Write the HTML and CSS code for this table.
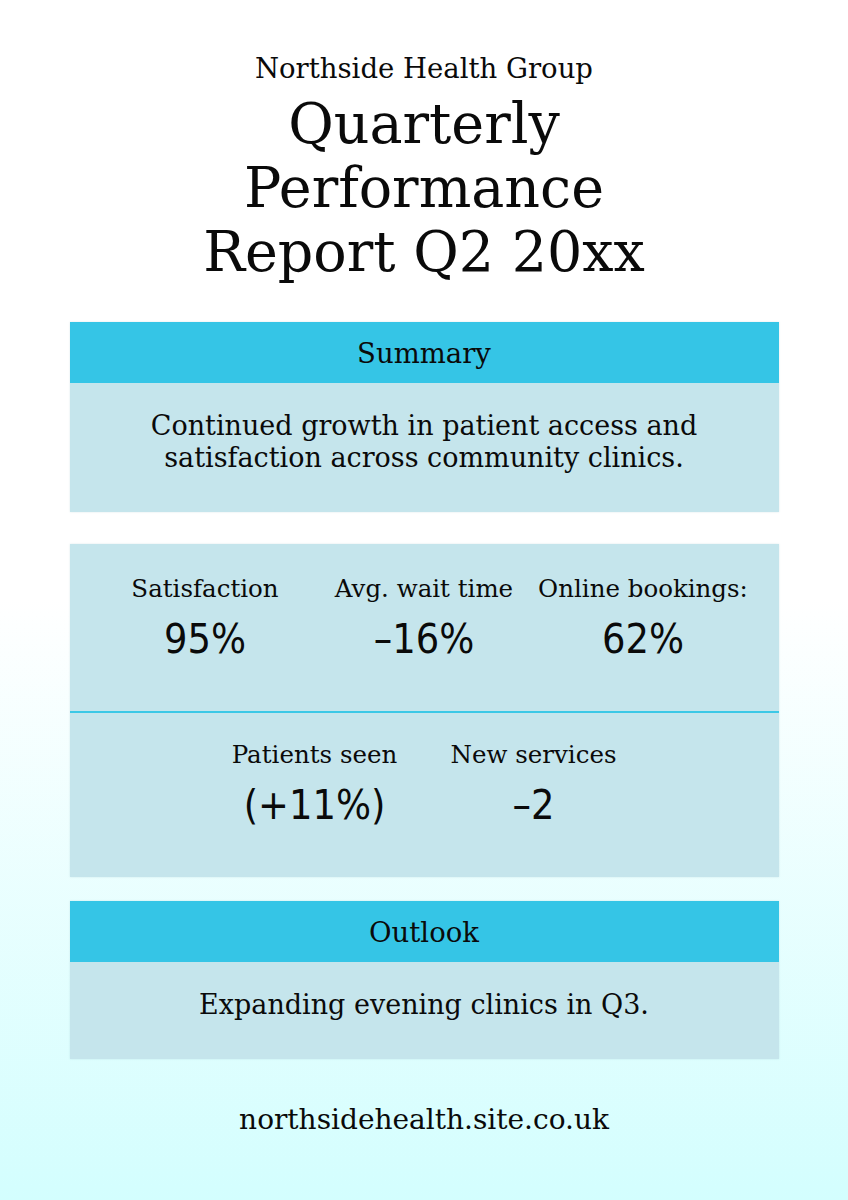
FILE: index.html
```html
<!DOCTYPE html>
<html lang="en">
<head>
<meta charset="utf-8">
<title>Quarterly Performance Report</title>
<link rel="stylesheet" href="styles.css">
</head>
<body>
<main class="page">
  <header class="masthead">
    <p class="org">Northside Health Group</p>
    <h1 class="title">Quarterly<br>Performance<br>Report Q2 20xx</h1>
  </header>

  <section class="panel">
    <h2 class="panel-head">Summary</h2>
    <div class="panel-body">
      <p>Continued growth in patient access and<br>satisfaction across community clinics.</p>
    </div>
  </section>

  <section class="stats">
    <div class="stat-row">
      <div class="stat"><span class="label">Satisfaction</span><span class="value">95%</span></div>
      <div class="stat"><span class="label">Avg. wait time</span><span class="value">–16%</span></div>
      <div class="stat"><span class="label">Online bookings:</span><span class="value">62%</span></div>
    </div>
    <div class="stat-row divided">
      <div class="stat"><span class="label">Patients seen</span><span class="value">(+11%)</span></div>
      <div class="stat"><span class="label">New services</span><span class="value">–2</span></div>
    </div>
  </section>

  <section class="panel outlook">
    <h2 class="panel-head">Outlook</h2>
    <div class="panel-body">
      <p>Expanding evening clinics in Q3.</p>
    </div>
  </section>

  <footer class="site">northsidehealth.site.co.uk</footer>
</main>
</body>
</html>
```

FILE: styles.css
```css
* { box-sizing: border-box; }

html, body {
  margin: 0;
  padding: 0;
}

body {
  width: 848px;
  height: 1200px;
  background: linear-gradient(to bottom, #ffffff 0%, #ffffff 50%, #d3fefe 100%);
  font-family: "DejaVu Serif", "Liberation Serif", serif;
  color: #0a0a0a;
}

.page {
  display: flex;
  flex-direction: column;
  align-items: center;
  padding-top: 51px;
}

.masthead {
  text-align: center;
}

.org {
  margin: 0;
  font-size: 27.5px;
  line-height: 34px;
}

.title {
  margin: 7px 0 0;
  font-weight: normal;
  font-size: 55.5px;
  line-height: 64px;
}

.panel {
  width: 709px;
  margin-top: 38px;
  box-shadow: 0 0 2px rgba(120, 170, 180, 0.25);
}

.panel-head {
  margin: 0;
  height: 61px;
  display: flex;
  align-items: center;
  justify-content: center;
  background: #35c5e6;
  font-weight: normal;
  font-size: 27.5px;
}

.panel-body {
  background: #c5e5ec;
  padding: 27px 30px 38px;
  text-align: center;
}

.panel-body p {
  margin: 0;
  font-size: 27px;
  line-height: 32px;
}

.stats {
  width: 709px;
  margin-top: 32px;
  background: #c5e5ec;
  box-shadow: 0 0 2px rgba(120, 170, 180, 0.25);
}

.stat-row {
  height: 167px;
  display: flex;
  justify-content: center;
  padding-top: 28px;
}

.stat-row.divided {
  height: 166px;
  border-top: 2px solid #3cc8e6;
  padding-top: 25px;
}

.stat {
  width: 219px;
  display: flex;
  flex-direction: column;
  align-items: center;
  white-space: nowrap;
}

.label {
  font-size: 24.5px;
  line-height: 34px;
}

.value {
  margin-top: 8px;
  font-family: "DejaVu Sans", "Liberation Sans", sans-serif;
  font-stretch: condensed;
  font-size: 41px;
  line-height: 50px;
}

.outlook {
  margin-top: 24px;
}

.site {
  margin-top: 43px;
  font-size: 28px;
  line-height: 36px;
}
```
